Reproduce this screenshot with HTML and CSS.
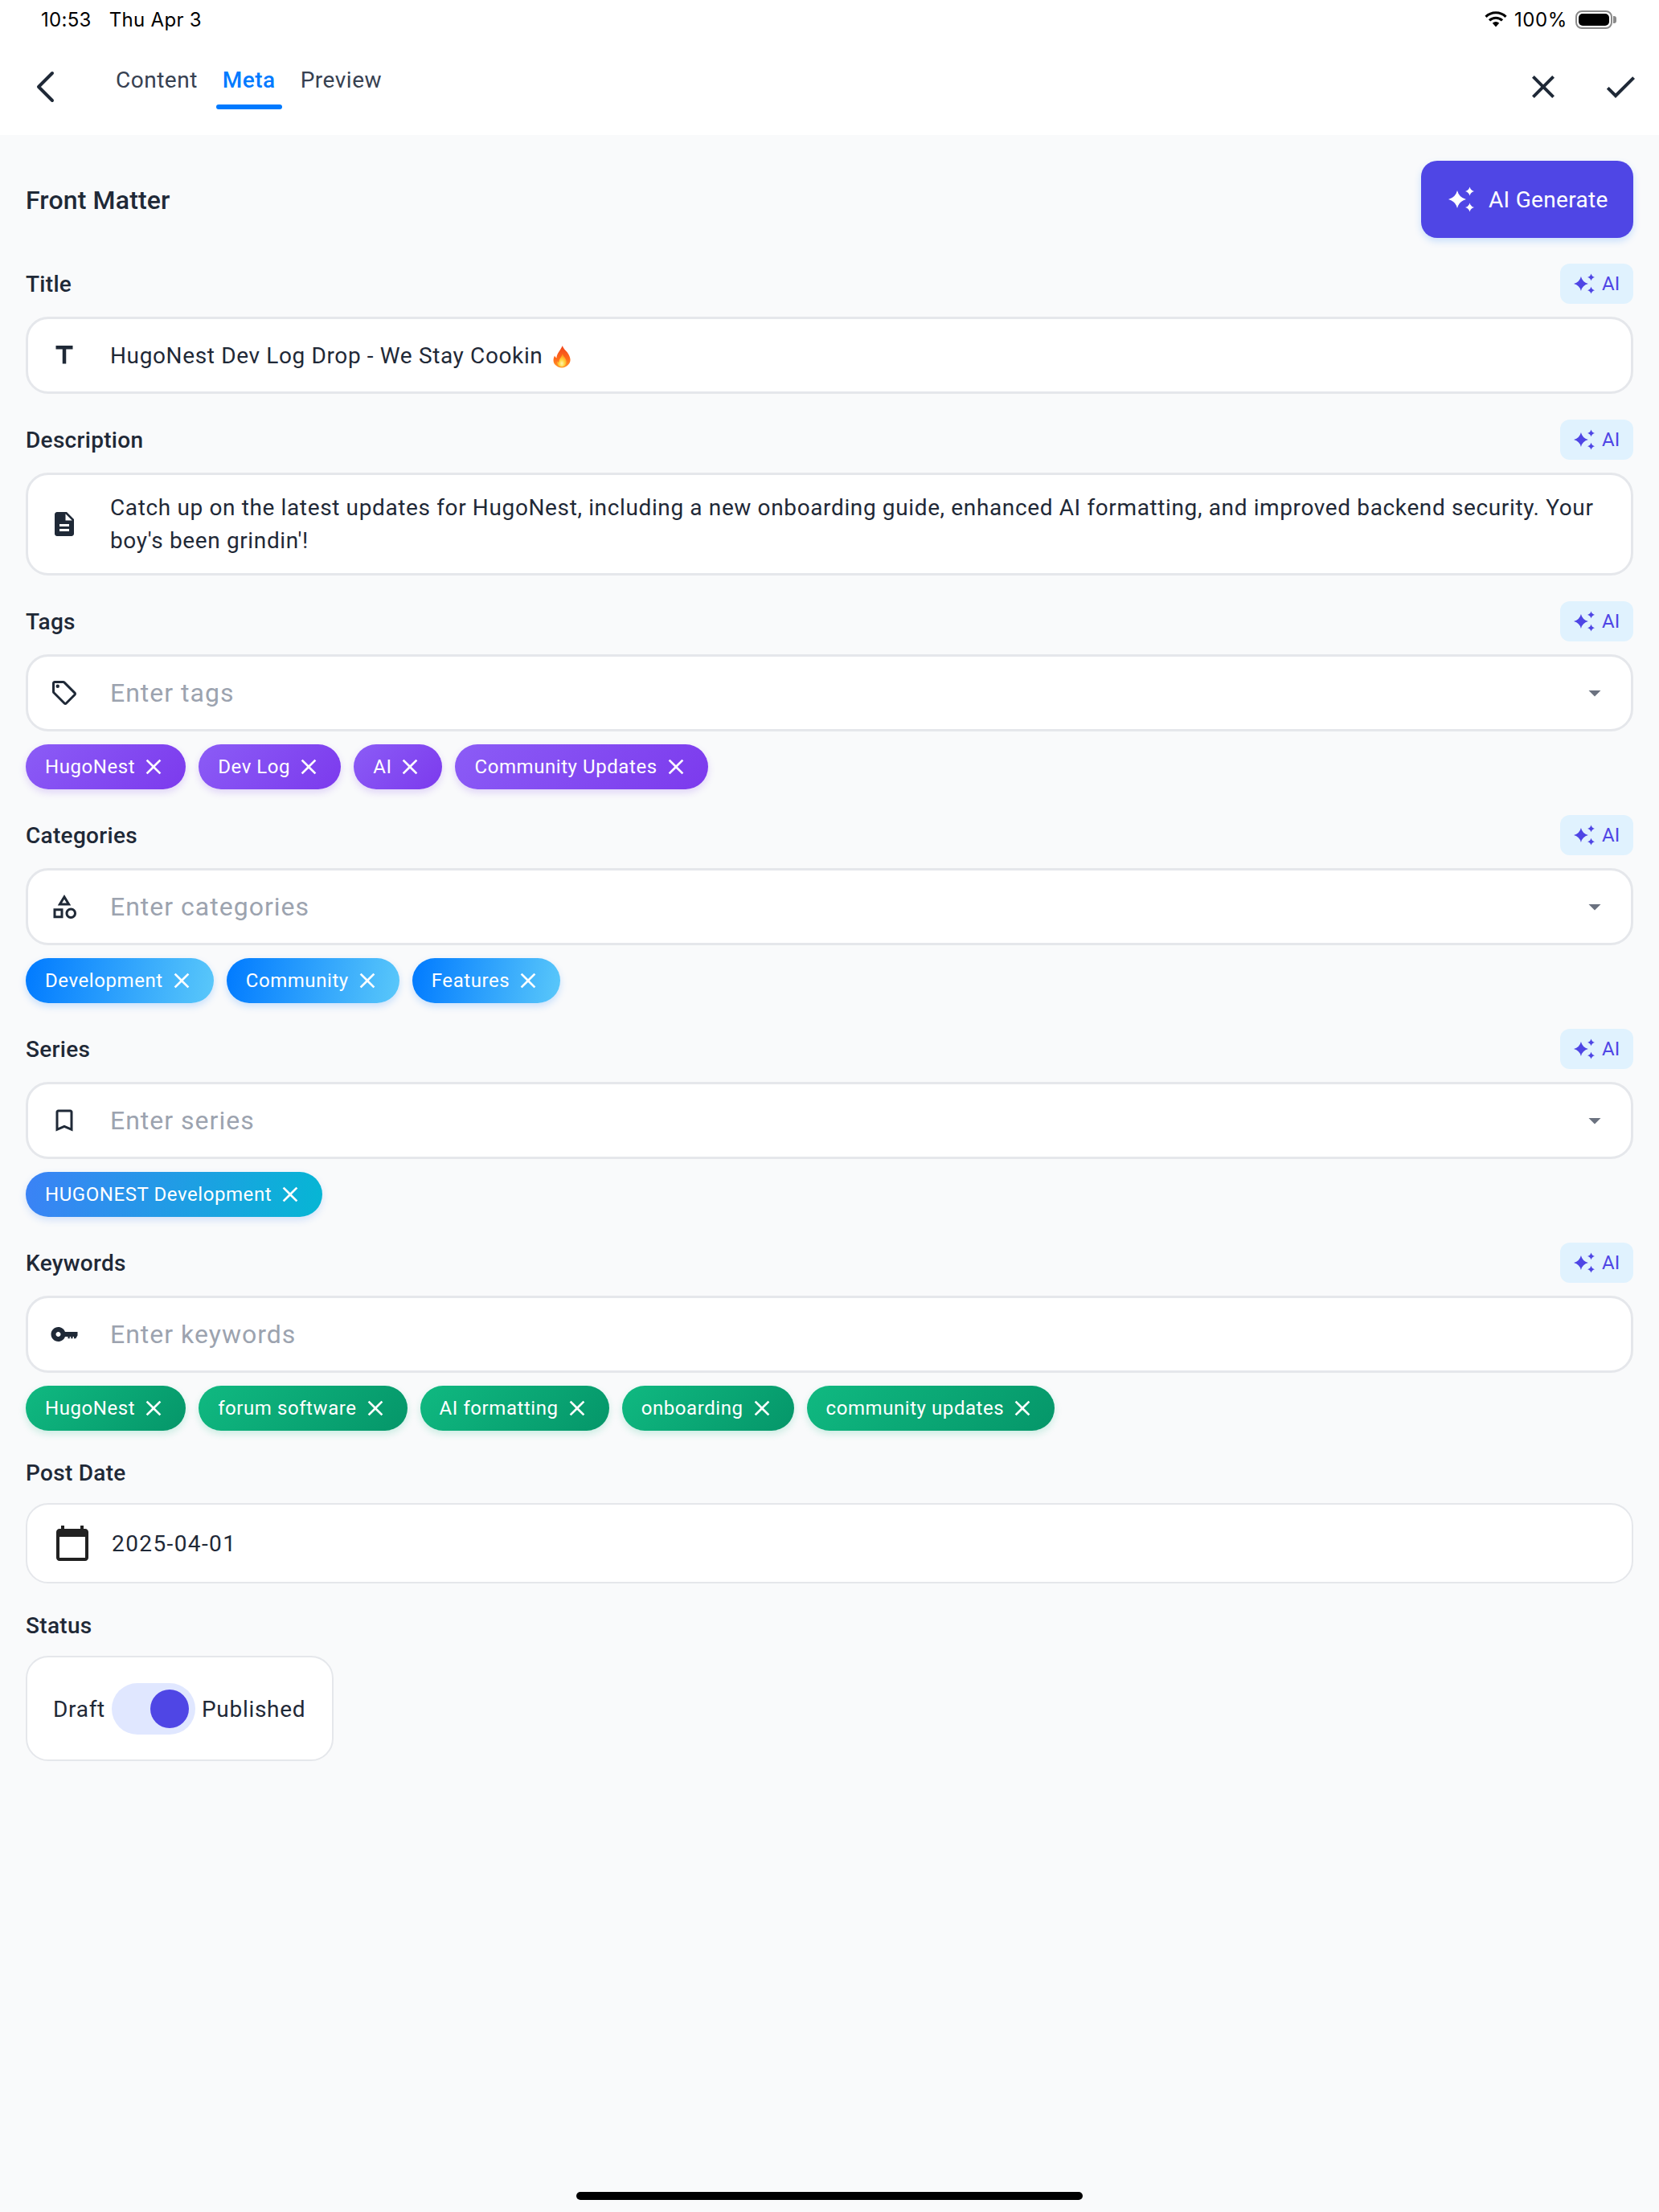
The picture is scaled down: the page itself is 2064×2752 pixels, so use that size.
FILE: index.html
```html
<!DOCTYPE html>
<html lang="en">
<head>
    <meta charset="UTF-8">
    <meta name="viewport" content="width=device-width, initial-scale=1.0">
    <title>Front Matter</title>
    <link rel="stylesheet" href="styles.css">
</head>
<body>
    <svg class="sprite" width="0" height="0">
        <symbol id="sparkle" viewBox="0 0 32 32">
            <path d="M11 5Q13.2 13.800 22 16Q13.2 18.200 11 27Q8.800 18.200 0 16Q8.800 13.800 11 5Z"/>
            <path d="M26.500 .5Q27.600 4.900 32 6Q27.600 7.100 26.500 11.500Q25.400 7.100 21 6Q25.400 4.900 26.500 .5Z"/>
            <path d="M26.500 20.500Q27.600 24.900 32 26Q27.600 27.100 26.500 31.500Q25.400 27.100 21 26Q25.400 24.900 26.500 20.500Z"/>
        </symbol>
        <symbol id="close" viewBox="0 0 24 24">
            <path d="M19 6.410 17.590 5 12 10.590 6.410 5 5 6.410 10.590 12 5 17.590 6.410 19 12 13.410 17.590 19 19 17.590 13.410 12z"/>
        </symbol>
        <symbol id="caret" viewBox="0 0 24 24">
            <path d="M7 10l5 5 5-5z"/>
        </symbol>
    </svg>

    <!-- status bar + top nav -->
    <header class="top">
        <div class="status-bar">
            <div class="status-time"><span>10:53</span><span>Thu Apr 3</span></div>
            <div class="status-right">
                <svg class="wifi" viewBox="0 0 28 20" width="28" height="20">
                    <path d="M1.500 6.800a18 18 0 0 1 25 0M6 11.400a11.700 11.700 0 0 1 16 0" fill="none" stroke="#000" stroke-width="3.200"/>
                    <path d="M9.800 14.800a6 6 0 0 1 8.400 0L14 19.500z" fill="#000"/>
                </svg>
                <span>100%</span>
                <div class="battery"><div class="battery-fill"></div></div>
            </div>
        </div>
        <nav class="nav">
            <button class="back-btn">
                <svg viewBox="0 0 24 40" width="24" height="40"><path d="M21 3 4 20l17 17" fill="none" stroke="#1f2937" stroke-width="4" stroke-linecap="round" stroke-linejoin="round"/></svg>
            </button>
            <div class="tabs">
                <div class="tab">Content</div>
                <div class="tab active">Meta</div>
                <div class="tab">Preview</div>
            </div>
            <div class="nav-actions">
                <svg class="nav-icon" viewBox="0 0 24 24"><use href="#close"/></svg>
                <svg class="nav-icon" viewBox="0 0 24 24"><path d="M9 16.170 4.830 12l-1.420 1.410L9 19 21 7l-1.410-1.410z"/></svg>
            </div>
        </nav>
    </header>

    <main class="content">
        <div class="page-head">
            <h1>Front Matter</h1>
            <button class="generate-btn">
                <svg class="sparkle-lg"><use href="#sparkle"/></svg>
                AI Generate
            </button>
        </div>

        <!-- title -->
        <section class="field">
            <div class="field-head">
                <label>Title</label>
                <button class="ai-chip"><svg class="sparkle-sm"><use href="#sparkle"/></svg>AI</button>
            </div>
            <div class="input-box">
                <svg class="field-icon" viewBox="0 0 24 24"><path d="M5 4v3h5.500v12h3V7H19V4z"/></svg>
                <div class="value">HugoNest Dev Log Drop - We Stay Cookin
                    <svg class="flame" viewBox="0 0 24 30" width="24" height="28">
                        <defs>
                            <linearGradient id="flameOuter" x1="0" y1="0" x2="0" y2="1">
                                <stop offset="0" stop-color="#f0441c"/>
                                <stop offset=".6" stop-color="#ff6a1a"/>
                                <stop offset="1" stop-color="#ff9a2a"/>
                            </linearGradient>
                            <radialGradient id="flameInner" cx="50%" cy="75%" r="60%">
                                <stop offset="0" stop-color="#fff6b0"/>
                                <stop offset=".5" stop-color="#ffd23c"/>
                                <stop offset="1" stop-color="#ff9a1f"/>
                            </radialGradient>
                        </defs>
                        <path d="M13 0c1 5 6 7 8.500 12.500 2 4.500 3 8-.5 12.500-2 2.700-5.500 4.500-9 4.500s-7-1.500-9.500-4.500C0 21.500.5 17 2.500 13.500c.5 1.500 1.300 2.500 2.500 3C5 11 9.500 7 13 0z" fill="url(#flameOuter)"/>
                        <path d="M13 11c.5 3 4 5 5 9 .8 3.500-1.500 8-6 8s-7-4-6-7.500c.5 1 1.200 1.600 2 2C8 18 11.500 15.500 13 11z" fill="url(#flameInner)"/>
                    </svg>
                </div>
            </div>
        </section>

        <!-- description -->
        <section class="field">
            <div class="field-head">
                <label>Description</label>
                <button class="ai-chip"><svg class="sparkle-sm"><use href="#sparkle"/></svg>AI</button>
            </div>
            <div class="input-box input-box-tall">
                <svg class="field-icon" viewBox="0 0 24 24"><path d="M14 2H6c-1.100 0-1.990.9-1.990 2L4 20c0 1.100.89 2 1.990 2H18c1.100 0 2-.9 2-2V8l-6-6zm2 16H8v-2h8v2zm0-4H8v-2h8v2zm-3-5V3.500L18.500 9H13z"/></svg>
                <div class="value">Catch up on the latest updates for HugoNest, including a new onboarding guide, enhanced AI formatting, and improved backend security. Your boy's been grindin'!</div>
            </div>
        </section>

        <!-- tags -->
        <section class="field">
            <div class="field-head">
                <label>Tags</label>
                <button class="ai-chip"><svg class="sparkle-sm"><use href="#sparkle"/></svg>AI</button>
            </div>
            <div class="input-box">
                <svg class="field-icon" viewBox="0 0 24 24"><path d="m21.410 11.410-8.830-8.830c-.37-.37-.88-.58-1.410-.58H4c-1.100 0-2 .9-2 2v7.170c0 .53.21 1.040.59 1.410l8.830 8.830c.78.78 2.050.78 2.830 0l7.170-7.170c.78-.78.78-2.040-.01-2.830zM12.830 20 4 11.170V4h7.170L20 12.830 12.830 20z"/><circle cx="6.500" cy="6.500" r="1.500"/></svg>
                <div class="placeholder">Enter tags</div>
                <svg class="caret"><use href="#caret"/></svg>
            </div>
            <div class="chips">
                <div class="chip chip-purple">HugoNest<svg class="chip-x"><use href="#close"/></svg></div>
                <div class="chip chip-purple">Dev Log<svg class="chip-x"><use href="#close"/></svg></div>
                <div class="chip chip-purple">AI<svg class="chip-x"><use href="#close"/></svg></div>
                <div class="chip chip-purple">Community Updates<svg class="chip-x"><use href="#close"/></svg></div>
            </div>
        </section>

        <!-- categories -->
        <section class="field">
            <div class="field-head">
                <label>Categories</label>
                <button class="ai-chip"><svg class="sparkle-sm"><use href="#sparkle"/></svg>AI</button>
            </div>
            <div class="input-box">
                <svg class="field-icon" viewBox="0 0 24 24"><path d="M12 2l-5.500 9h11L12 2zm0 3.840L13.930 9h-3.870L12 5.840zM17.500 13c-2.490 0-4.500 2.010-4.500 4.500s2.010 4.500 4.500 4.500 4.500-2.010 4.500-4.500-2.010-4.500-4.500-4.500zm0 7c-1.380 0-2.500-1.120-2.500-2.500s1.120-2.500 2.500-2.500 2.500 1.120 2.500 2.500-1.120 2.500-2.500 2.500zM3 21.500h8v-8H3v8zm2-6h4v4H5v-4z"/></svg>
                <div class="placeholder">Enter categories</div>
                <svg class="caret"><use href="#caret"/></svg>
            </div>
            <div class="chips">
                <div class="chip chip-blue">Development<svg class="chip-x"><use href="#close"/></svg></div>
                <div class="chip chip-blue">Community<svg class="chip-x"><use href="#close"/></svg></div>
                <div class="chip chip-blue">Features<svg class="chip-x"><use href="#close"/></svg></div>
            </div>
        </section>

        <!-- series -->
        <section class="field">
            <div class="field-head">
                <label>Series</label>
                <button class="ai-chip"><svg class="sparkle-sm"><use href="#sparkle"/></svg>AI</button>
            </div>
            <div class="input-box">
                <svg class="field-icon" viewBox="0 0 24 24"><path d="M17 3H7c-1.100 0-1.990.9-1.990 2L5 21l7-3 7 3V5c0-1.100-.9-2-2-2zm0 15l-5-2.180L7 18V5h10v13z"/></svg>
                <div class="placeholder">Enter series</div>
                <svg class="caret"><use href="#caret"/></svg>
            </div>
            <div class="chips">
                <div class="chip chip-teal">HUGONEST Development<svg class="chip-x"><use href="#close"/></svg></div>
            </div>
        </section>

        <!-- keywords -->
        <section class="field">
            <div class="field-head">
                <label>Keywords</label>
                <button class="ai-chip"><svg class="sparkle-sm"><use href="#sparkle"/></svg>AI</button>
            </div>
            <div class="input-box">
                <svg class="field-icon" viewBox="0 0 24 24"><path d="M12.650 10C11.830 7.670 9.610 6 7 6c-3.310 0-6 2.690-6 6s2.690 6 6 6c2.610 0 4.830-1.670 5.650-4h2.350v1.500h1.500V14h1v1.500h1.500V14h1v1.500h1.500L23 13v-3H12.650zM7 14c-1.100 0-2-.9-2-2s.9-2 2-2 2 .9 2 2-.9 2-2 2z"/></svg>
                <div class="placeholder">Enter keywords</div>
            </div>
            <div class="chips">
                <div class="chip chip-green">HugoNest<svg class="chip-x"><use href="#close"/></svg></div>
                <div class="chip chip-green">forum software<svg class="chip-x"><use href="#close"/></svg></div>
                <div class="chip chip-green">AI formatting<svg class="chip-x"><use href="#close"/></svg></div>
                <div class="chip chip-green">onboarding<svg class="chip-x"><use href="#close"/></svg></div>
                <div class="chip chip-green">community updates<svg class="chip-x"><use href="#close"/></svg></div>
            </div>
        </section>

        <!-- post date -->
        <section class="field">
            <div class="field-head field-head-plain">
                <label>Post Date</label>
            </div>
            <div class="input-box date-box">
                <svg class="date-icon" viewBox="0 0 24 24"><path d="M20 3h-1V1h-2v2H7V1H5v2H4c-1.100 0-2 .9-2 2v16c0 1.100.9 2 2 2h16c1.100 0 2-.9 2-2V5c0-1.100-.9-2-2-2zm0 18H4V8h16v13z"/></svg>
                <div class="value date-value">2025-04-01</div>
            </div>
        </section>

        <!-- status -->
        <section class="field">
            <div class="field-head field-head-plain">
                <label>Status</label>
            </div>
            <div class="status-box">
                <span>Draft</span>
                <div class="toggle"><div class="toggle-knob"></div></div>
                <span>Published</span>
            </div>
        </section>
    </main>

    <div class="home-bar"><div class="home-indicator"></div></div>
</body>
</html>
```

FILE: styles.css
```css
* {
    box-sizing: border-box;
}

body {
    font-family: Roboto, "Noto Sans", sans-serif;
    margin: 0;
    height: 100vh;
    display: flex;
    flex-direction: column;
    background-color: #f9fafb;
    color: #1f2937;
    overflow: hidden;
}

button {
    font-family: inherit;
    border: none;
    padding: 0;
    background: none;
}

.sprite {
    position: absolute;
}

/* top area */
.top {
    height: 168px;
    background-color: #fff;
}

.status-bar {
    height: 48px;
    padding: 0 53px 0 51px;
    display: flex;
    align-items: center;
    justify-content: space-between;
    color: #000;
    font-family: Inter, Roboto, sans-serif;
    font-size: 24px;
    letter-spacing: 0.3px;
}

.status-time {
    display: flex;
    gap: 22px;
}

.status-right {
    display: flex;
    align-items: center;
    gap: 9px;
    letter-spacing: 0.6px;
}

.battery {
    width: 46px;
    height: 23px;
    margin-left: 1px;
    margin-right: 5px;
    padding: 2px;
    border: 2px solid #8a8a8a;
    border-radius: 8px;
    position: relative;
}

.battery::after {
    content: "";
    position: absolute;
    right: -7px;
    top: 5px;
    width: 4px;
    height: 9px;
    background-color: #8a8a8a;
    border-radius: 0 3px 3px 0;
}

.battery-fill {
    height: 100%;
    background-color: #000;
    border-radius: 5px;
}

.nav {
    height: 120px;
    padding: 0 24px 0 44px;
    display: flex;
    align-items: center;
}

.back-btn {
    width: 24px;
    height: 40px;
}

.tabs {
    display: flex;
    gap: 15px;
    margin-left: 68px;
}

.tab {
    padding: 0 8px;
    font-size: 28px;
    line-height: 38px;
    letter-spacing: 0.5px;
    color: #374151;
}

.tab::after {
    content: "";
    display: block;
    height: 6px;
    margin: 11px -8px 0;
    border-radius: 3px;
}

.tab.active {
    color: #007aff;
    font-weight: 500;
}

.tab.active::after {
    background-color: #007aff;
}

.nav-actions {
    margin-left: auto;
    display: flex;
    gap: 48px;
}

.nav-icon {
    width: 48px;
    height: 48px;
    fill: #1f2937;
}

/* main form */
.content {
    flex: 1;
    padding: 32px 32px 0;
}

.page-head {
    height: 96px;
    margin-bottom: 32px;
    display: flex;
    align-items: center;
    justify-content: space-between;
}

.page-head h1 {
    margin: 0;
    font-size: 32px;
    font-weight: 500;
    letter-spacing: 0.15px;
    padding-top: 1px;
}

.generate-btn {
    width: 264px;
    height: 96px;
    padding-left: 34px;
    display: flex;
    align-items: center;
    gap: 18px;
    background-color: #4f46e5;
    color: #fff;
    font-size: 28px;
    letter-spacing: 0.3px;
    border-radius: 20px;
    box-shadow: 0 4px 10px rgba(0, 122, 255, 0.2);
}

.sparkle-lg {
    width: 32px;
    height: 32px;
    fill: #fff;
}

.sparkle-sm {
    width: 26px;
    height: 26px;
    fill: #4f46e5;
}

.field {
    margin-bottom: 32px;
}

.field-head {
    height: 50px;
    margin-bottom: 16px;
    display: flex;
    align-items: center;
    justify-content: space-between;
}

.field-head-plain {
    height: 38px;
    padding-top: 2px;
    margin-bottom: 20px;
}

.field-head label {
    font-size: 28px;
    font-weight: 500;
    letter-spacing: 0.3px;
}

.ai-chip {
    width: 91px;
    height: 50px;
    padding-left: 17px;
    display: flex;
    align-items: center;
    gap: 9px;
    background-color: #e0f2fe;
    color: #4f46e5;
    font-size: 24px;
    border-radius: 12px;
}

.input-box {
    height: 96px;
    padding: 0 27px;
    display: flex;
    align-items: center;
    background-color: #fff;
    border: 3px solid #e5e7eb;
    border-radius: 28px;
}

.input-box-tall {
    height: 128px;
}

.field-icon {
    width: 36px;
    height: 36px;
    flex: none;
    margin-right: 39px;
    fill: #1f2937;
}

.value {
    flex: 1;
    font-size: 28px;
    line-height: 41px;
    letter-spacing: 0.63px;
}

.date-value {
    letter-spacing: 1.4px;
}

.flame {
    vertical-align: -6px;
    margin-left: 4px;
}

.placeholder {
    flex: 1;
    font-size: 32px;
    letter-spacing: 1px;
    color: #9ca3af;
}

.caret {
    width: 36px;
    height: 36px;
    flex: none;
    fill: #6b7280;
}

.chips {
    margin-top: 16px;
    display: flex;
    gap: 16px;
}

.chip {
    height: 56px;
    padding: 0 24px;
    display: flex;
    align-items: center;
    gap: 7px;
    color: #fff;
    font-size: 24px;
    letter-spacing: 0.57px;
    border-radius: 28px;
}

.chip-x {
    width: 32px;
    height: 32px;
    fill: #fff;
}

.chip-purple {
    background: linear-gradient(135deg, #8b5cf6, #7c3aed);
    box-shadow: 0 4px 10px rgba(124, 58, 237, 0.2);
}

.chip-blue {
    background: linear-gradient(100deg, #007aff, #5ac8fa);
    box-shadow: 0 4px 10px rgba(0, 122, 255, 0.2);
}

.chip-teal {
    background: linear-gradient(100deg, #3b82f6, #06b6d4);
    box-shadow: 0 4px 10px rgba(59, 130, 246, 0.2);
}

.chip-green {
    background: linear-gradient(135deg, #10b981, #059669);
    box-shadow: 0 4px 10px rgba(16, 185, 129, 0.2);
}

.date-box {
    height: 100px;
    padding-left: 32px;
    border-width: 2px;
}

.date-icon {
    width: 48px;
    height: 48px;
    flex: none;
    margin-right: 25px;
    fill: #212121;
}

.status-box {
    width: 383px;
    height: 131px;
    padding: 1px 32px 0;
    display: flex;
    align-items: center;
    gap: 8px;
    background-color: #fff;
    border: 2px solid #e5e7eb;
    border-radius: 28px;
    font-size: 28px;
    letter-spacing: 0.7px;
}

.toggle {
    width: 104px;
    height: 64px;
    padding: 8px;
    display: flex;
    justify-content: flex-end;
    background-color: #e0e7ff;
    border-radius: 32px;
}

.toggle-knob {
    width: 48px;
    height: 48px;
    background-color: #4f46e5;
    border-radius: 50%;
}

.home-bar {
    height: 25px;
    padding-bottom: 15px;
    display: flex;
    justify-content: center;
}

.home-indicator {
    width: 630px;
    height: 10px;
    background-color: #000;
    border-radius: 5px;
}
```
